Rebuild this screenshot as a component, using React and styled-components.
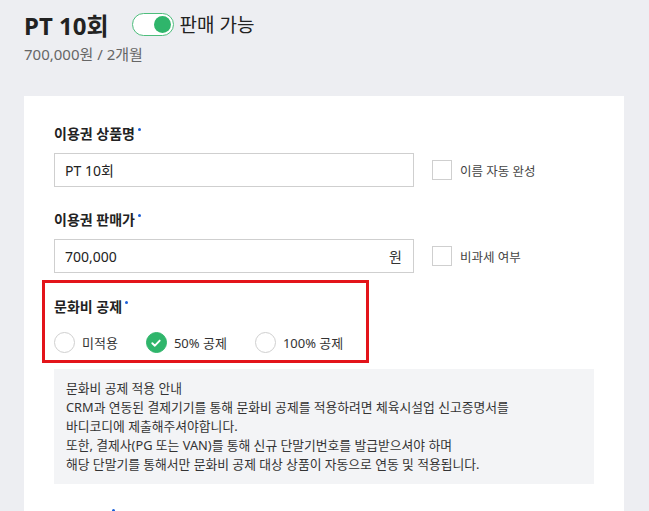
import React from 'react';
import styled, { createGlobalStyle } from 'styled-components';

const GlobalStyle = createGlobalStyle`
	html, body {
		margin: 0;
		padding: 0;
		background: #edeef2;
		font-family: 'Noto Sans', 'Noto Sans CJK KR', sans-serif;
		color: #222;
	}
	* {
		box-sizing: border-box;
	}
`;

const radios = [
	{ id: 'none', label: '미적용' },
	{ id: 'half', label: '50% 공제' },
	{ id: 'full', label: '100% 공제' },
];

const guide = [
	'문화비 공제 적용 안내',
	'CRM과 연동된 결제기기를 통해 문화비 공제를 적용하려면 체육시설업 신고증명서를',
	'바디코디에 제출해주셔야합니다.',
	'또한, 결제사(PG 또는 VAN)를 통해 신규 단말기번호를 발급받으셔야 하며',
	'해당 단말기를 통해서만 문화비 공제 대상 상품이 자동으로 연동 및 적용됩니다.',
];

const App = () => {
	const selected = 'half';
	return (
		<Page>
			<GlobalStyle />
			<Header>
				<TitleRow>
					<Title>PT 10회</Title>
					<Toggle $on>
						<Knob />
					</Toggle>
					<ToggleText>판매 가능</ToggleText>
				</TitleRow>
				<SubTitle>700,000원 / 2개월</SubTitle>
			</Header>
			<Card>
				<Field>
					<Label>이용권 상품명</Label>
					<Row>
						<InputBox>
							<InputText>PT 10회</InputText>
						</InputBox>
						<Check>
							<CheckBox />
							<CheckText>이름 자동 완성</CheckText>
						</Check>
					</Row>
				</Field>
				<Field>
					<Label>이용권 판매가</Label>
					<Row>
						<InputBox>
							<InputText>700,000</InputText>
							<Unit>원</Unit>
						</InputBox>
						<Check>
							<CheckBox />
							<CheckText>비과세 여부</CheckText>
						</Check>
					</Row>
				</Field>
				<Highlight>
					<Label>문화비 공제</Label>
					<RadioRow>
						{radios.map((r) => (
							<RadioItem key={r.id}>
								<Radio $checked={r.id === selected}>
									{r.id === selected && (
										<svg width="12" height="12" viewBox="0 0 12 12">
											<path
												d="M2.3 6.2 L4.9 8.7 L9.7 3.6"
												fill="none"
												stroke="#fff"
												strokeWidth="1.9"
												strokeLinecap="round"
												strokeLinejoin="round"
											/>
										</svg>
									)}
								</Radio>
								<RadioText>{r.label}</RadioText>
							</RadioItem>
						))}
					</RadioRow>
				</Highlight>
				<Guide>
					{guide.map((line) => (
						<GuideLine key={line}>{line}</GuideLine>
					))}
				</Guide>
				<NextField>
					<Label $dotTop={1}>이용 기간</Label>
				</NextField>
			</Card>
		</Page>
	);
};

const Page = styled.div`
	height: 511px;
	overflow: hidden;
`;
const Header = styled.div`
	padding: 9px 24px 0;
`;
const TitleRow = styled.div`
	display: flex;
	align-items: center;
	height: 30px;
`;
const Title = styled.div`
	font-size: 24px;
	font-weight: 700;
	color: #222;
`;
const Toggle = styled.div`
	width: 42px;
	height: 23px;
	margin-left: 23px;
	border: 1.5px solid #4dbd7c;
	border-radius: 12px;
	background: #fff;
	display: flex;
	align-items: center;
	justify-content: ${(p) => (p.$on ? 'flex-end' : 'flex-start')};
	padding: 0 2px;
`;
const Knob = styled.div`
	width: 17px;
	height: 17px;
	border-radius: 50%;
	background: #2fb56b;
`;
const ToggleText = styled.div`
	margin-left: 6px;
	font-size: 19px;
	color: #222;
`;
const SubTitle = styled.div`
	margin-top: 4px;
	font-size: 15px;
	color: #666;
`;
const Card = styled.div`
	margin: 32px 25px 0 24px;
	background: #fff;
	padding: 28px 30px 0;
	min-height: 420px;
`;
const Field = styled.div`
	margin-bottom: 23px;
`;
const Label = styled.div`
	display: flex;
	width: fit-content;
	position: relative;
	font-size: 14px;
	line-height: 20px;
	font-weight: 600;
	color: #222;
	&::after {
		content: '';
		position: absolute;
		top: ${(p) => p.$dotTop ?? 4}px;
		right: -6px;
		width: 3px;
		height: 3px;
		border-radius: 50%;
		background: #1a5fd8;
	}
`;
const Row = styled.div`
	display: flex;
	align-items: center;
	margin-top: 9px;
`;
const InputBox = styled.div`
	width: 360px;
	height: 34px;
	border: 1px solid #cfcfcf;
	display: flex;
	align-items: center;
	justify-content: space-between;
	padding: 0 11px 0 10px;
`;
const InputText = styled.span`
	font-size: 14px;
	color: #222;
`;
const Unit = styled.span`
	font-size: 14px;
	color: #333;
`;
const Check = styled.div`
	display: flex;
	align-items: center;
	margin-left: 18px;
`;
const CheckBox = styled.div`
	width: 20px;
	height: 20px;
	border: 1px solid #cfcfcf;
	background: #fff;
`;
const CheckText = styled.span`
	margin-left: 8px;
	font-size: 12.5px;
	color: #444;
`;
const Highlight = styled.div`
	width: 327px;
	margin: -16px 0 0 -12px;
	border: 3px solid #e3141a;
	padding: 14px 9px 7px;
`;
const RadioRow = styled.div`
	display: flex;
	align-items: center;
	gap: 28px;
	margin-top: 15px;
`;
const RadioItem = styled.div`
	display: flex;
	align-items: center;
	gap: 7px;
`;
const Radio = styled.div`
	width: 21px;
	height: 21px;
	border-radius: 50%;
	border: 1px solid ${(p) => (p.$checked ? '#2fb56b' : '#cfcfcf')};
	background: ${(p) => (p.$checked ? '#2fb56b' : '#fff')};
	display: flex;
	align-items: center;
	justify-content: center;
`;
const RadioText = styled.span`
	font-size: 13px;
	color: #333;
`;
const Guide = styled.div`
	margin-top: 6px;
	width: 540px;
	background: #f3f4f6;
	padding: 10px 12px;
`;
const GuideLine = styled.div`
	font-size: 12.8px;
	line-height: 19px;
	color: #333;
`;
const NextField = styled.div`
	margin-top: 24px;
`;

export default App;
